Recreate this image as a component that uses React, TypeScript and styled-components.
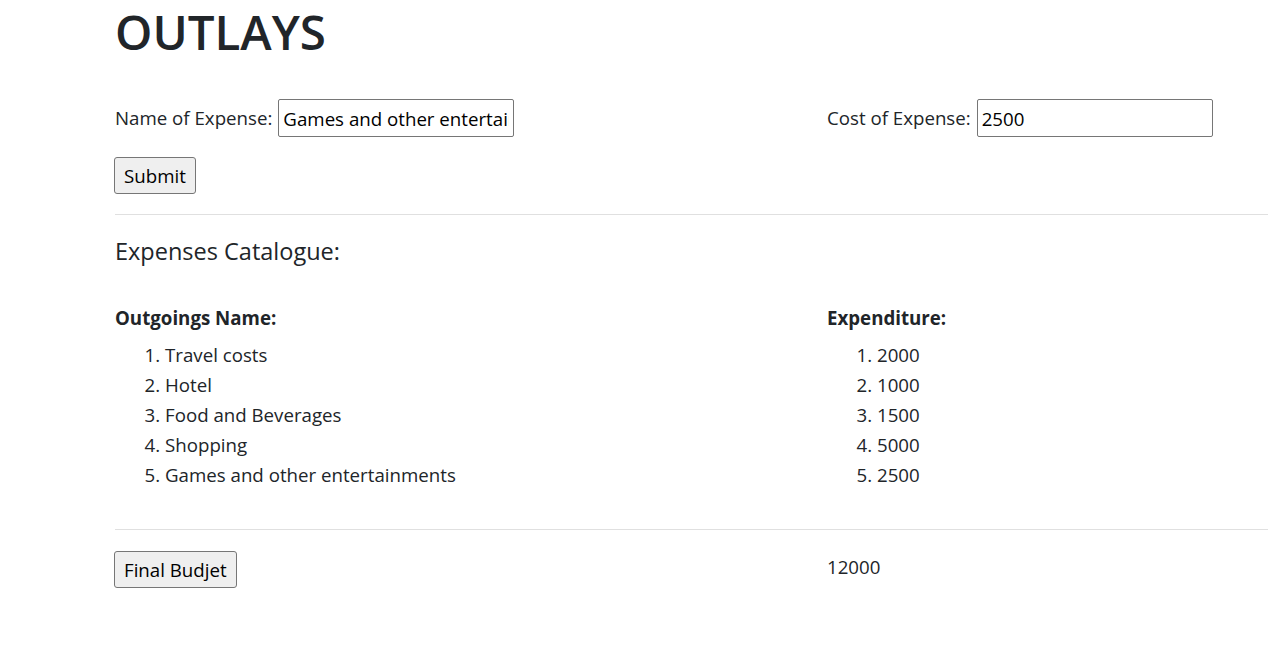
import React from "react";
import styled, { createGlobalStyle } from "styled-components";

const GlobalStyle = createGlobalStyle`
  html, body {
    margin: 0;
    padding: 0;
    background: #ffffff;
  }
  body {
    font-family: "Open Sans", "Noto Sans", sans-serif;
    font-size: 18.7px;
    line-height: 30px;
    color: #212529;
  }
  * { box-sizing: border-box; }
`;

const Page = styled.div`
  padding: 0 0 60px 115px;
`;

const Title = styled.h1`
  margin: 0 0 39px;
  padding-top: 4px;
  font-size: 47.5px;
  line-height: 56px;
  font-weight: 600;
  color: #212529;
`;

const TwoCols = styled.div`
  display: grid;
  grid-template-columns: 712px 1fr;
  align-items: start;
`;

const Field = styled.label`
  display: flex;
  align-items: center;
  gap: 6px;
  height: 38px;
`;

const TextInput = styled.input`
  width: 236px;
  height: 38px;
  padding: 0 4px;
  border: 1px solid #767676;
  border-radius: 2px;
  font: inherit;
  color: #000;
  background: #fff;
`;

const Button = styled.button`
  height: 37px;
  margin-left: -1px;
  padding: 0 9px;
  border: 1px solid #767676;
  border-radius: 3px;
  background: #efefef;
  font: inherit;
  line-height: 35px;
  color: #000;
`;

const SubmitRow = styled.div`
  margin-top: 20px;
`;

const Rule = styled.hr<{ $top: number; $bottom: number }>`
  margin: ${(p) => `${p.$top}px 0 ${p.$bottom}px`};
  border: 0;
  border-top: 1px solid #e0e0e0;
  height: 0;
`;

const SectionTitle = styled.h4`
  margin: 0 0 37px;
  font-size: 23.5px;
  line-height: 30px;
  font-weight: 500;
`;

const ColHead = styled.div`
  font-weight: 700;
  margin-bottom: 7px;
`;

const List = styled.ol`
  margin: 0;
  padding-left: 50px;
`;

const Item = styled.li``;

const Total = styled.div`
  padding-top: 4px;
  line-height: 24px;
`;

const names = [
  "Travel costs",
  "Hotel",
  "Food and Beverages",
  "Shopping",
  "Games and other entertainments",
];
const costs = [2000, 1000, 1500, 5000, 2500];

export default function App() {
  return (
    <>
      <GlobalStyle />
      <Page>
        <Title>OUTLAYS</Title>
        <TwoCols>
          <Field>
            Name of Expense:
            <TextInput type="text" defaultValue="Games and other entertainments" />
          </Field>
          <Field>
            Cost of Expense:
            <TextInput type="text" defaultValue="2500" />
          </Field>
        </TwoCols>
        <SubmitRow>
          <Button type="button">Submit</Button>
        </SubmitRow>
        <Rule $top={20} $bottom={21} />
        <SectionTitle>Expenses Catalogue:</SectionTitle>
        <TwoCols>
          <div>
            <ColHead>Outgoings Name:</ColHead>
            <List>
              {names.map((n) => (
                <Item key={n}>{n}</Item>
              ))}
            </List>
          </div>
          <div>
            <ColHead>Expenditure:</ColHead>
            <List>
              {costs.map((c, i) => (
                <Item key={i}>{c}</Item>
              ))}
            </List>
          </div>
        </TwoCols>
        <Rule $top={39} $bottom={21} />
        <TwoCols>
          <div>
            <Button type="button">Final Budjet</Button>
          </div>
          <Total>12000</Total>
        </TwoCols>
      </Page>
    </>
  );
}
